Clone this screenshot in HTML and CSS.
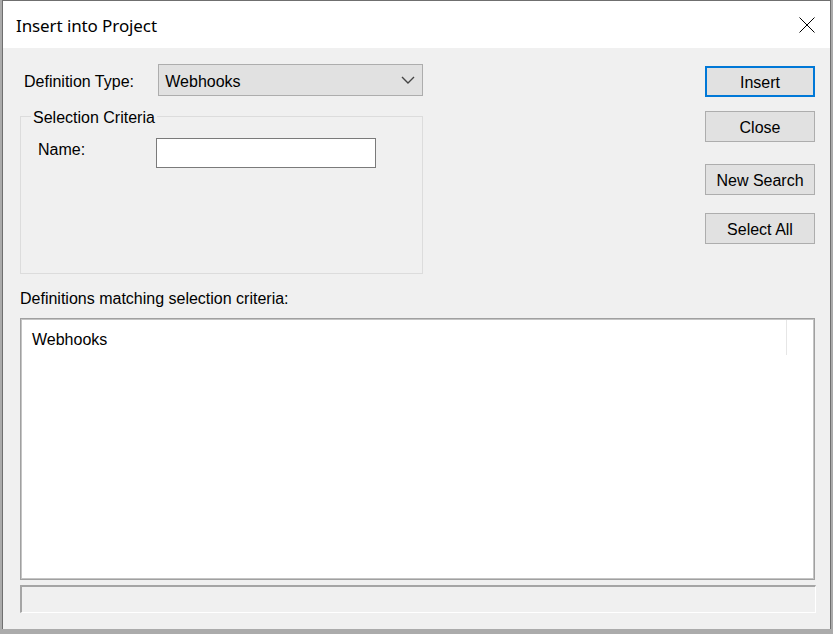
FILE: index.html
```html
<!DOCTYPE html>
<html>
<head>
<meta charset="utf-8">
<link rel="stylesheet" href="styles.css">
</head>
<body>
<div class="window">
  <div class="titlebar">
    <span class="title">Insert into Project</span>
    <svg class="close" width="16" height="16" viewBox="0 0 16 16"><path d="M0.5 0.5 L15.5 15.5 M15.5 0.5 L0.5 15.5" stroke="#000" stroke-width="1" fill="none"/></svg>
  </div>
  <div class="content">
    <div class="top">
      <div class="leftcol">
        <div class="typerow">
          <span class="typelabel">Definition Type:</span>
          <div class="combo">
            <span class="combotext">Webhooks</span>
            <svg class="chev" width="14" height="8" viewBox="0 0 14 8"><path d="M1 1 L7 7 L13 1" stroke="#444" stroke-width="1.4" fill="none"/></svg>
          </div>
        </div>
        <fieldset class="group">
          <legend>Selection Criteria</legend>
          <div class="group-body">
            <span class="namelabel">Name:</span>
            <div class="input"></div>
          </div>
        </fieldset>
      </div>
      <div class="buttons">
        <div class="btn default">Insert</div>
        <div class="btn close-btn">Close</div>
        <div class="btn search-btn">New Search</div>
        <div class="btn all-btn">Select All</div>
      </div>
    </div>
    <div class="matchlabel">Definitions matching selection criteria:</div>
    <div class="list">
      <div class="row"><span class="cell">Webhooks</span></div>
    </div>
    <div class="status"></div>
  </div>
</div>
</body>
</html>
```
FILE: styles.css
```css
html, body {
  margin: 0;
  padding: 0;
}
body {
  background: #ababab;
  width: 833px;
  height: 634px;
  overflow: hidden;
  font-family: "Liberation Sans", Arial, sans-serif;
  font-size: 16px;
  line-height: 18px;
  color: #000;
}
.window {
  margin-left: 2px;
  width: 829px;
  height: 629px;
  box-sizing: border-box;
  border: 1px solid #6f6f6f;
  border-bottom: none;
  background: #f0f0f0;
  display: flex;
  flex-direction: column;
}
.titlebar {
  height: 47px;
  background: #fff;
  display: flex;
  align-items: center;
  justify-content: space-between;
  padding: 0 15px 0 13px;
  flex-shrink: 0;
}
.title {
  font-family: "Noto Sans", "Open Sans", sans-serif;
  font-size: 17px;
  letter-spacing: -0.1px;
  line-height: 20px;
  margin-top: 2px;
}
.close {
  display: block;
  margin-top: 1px;
}
.content {
  padding: 0 15px 0 17px;
  display: flex;
  flex-direction: column;
}
.top {
  display: flex;
  justify-content: space-between;
}
.leftcol {
  display: flex;
  flex-direction: column;
  width: 403px;
}
.typerow {
  display: flex;
  align-items: center;
  margin-top: 16px;
}
.typelabel {
  width: 135px;
  margin-left: 4px;
  padding-top: 4px;
}
.combo {
  width: 266px;
  height: 32px;
  box-sizing: border-box;
  border: 1px solid #adadad;
  background: #e1e1e1;
  display: flex;
  align-items: center;
  justify-content: space-between;
  padding: 0 7px 0 6px;
}
.combotext {
  padding-top: 4px;
}
.chev {
  display: block;
}
.group {
  margin: 9px 0 0 0;
  padding: 0;
  border: 1px solid #dcdcdc;
  width: 403px;
  box-sizing: border-box;
  min-width: 0;
}
.group legend {
  margin-left: 10px;
  padding: 4px 2px 0 2px;
  line-height: 18px;
}
.group-body {
  height: 146px;
  box-sizing: border-box;
  padding-top: 11px;
  display: flex;
  align-items: flex-start;
}
.namelabel {
  width: 118px;
  margin-left: 17px;
  margin-top: 3px;
}
.input {
  width: 220px;
  height: 30px;
  box-sizing: border-box;
  border: 1px solid #7a7a7a;
  background: #fff;
}
.buttons {
  display: flex;
  flex-direction: column;
  width: 110px;
  padding-top: 18px;
}
.btn {
  height: 31px;
  box-sizing: border-box;
  border: 1px solid #adadad;
  background: #e1e1e1;
  display: flex;
  align-items: center;
  justify-content: center;
  padding-top: 2px;
}
.btn.default {
  border: 2px solid #0078d7;
}
.close-btn { margin-top: 14px; }
.search-btn { margin-top: 22px; }
.all-btn { margin-top: 18px; }
.matchlabel {
  margin-top: 16px;
}
.list {
  margin-top: 10px;
  height: 262px;
  box-sizing: border-box;
  border: 1px solid #a0a0a0;
  box-shadow: inset 1px 1px 0 #c4c4c4, inset -1px -1px 0 #c4c4c4;
  background: #fff;
  padding: 1px 1px;
}
.row {
  display: flex;
  height: 35px;
  align-items: center;
}
.cell {
  width: 765px;
  box-sizing: border-box;
  padding-left: 10px;
  padding-top: 4px;
  height: 35px;
  display: flex;
  align-items: center;
  border-right: 1px solid #e6e6e6;
}
.status {
  margin-top: 5px;
  margin-right: -1px;
  height: 28px;
  box-sizing: border-box;
  border-top: 2px solid #a5a5a5;
  border-left: 2px solid #a5a5a5;
  border-bottom: 1px solid #fff;
  border-right: 1px solid #fff;
}
```
